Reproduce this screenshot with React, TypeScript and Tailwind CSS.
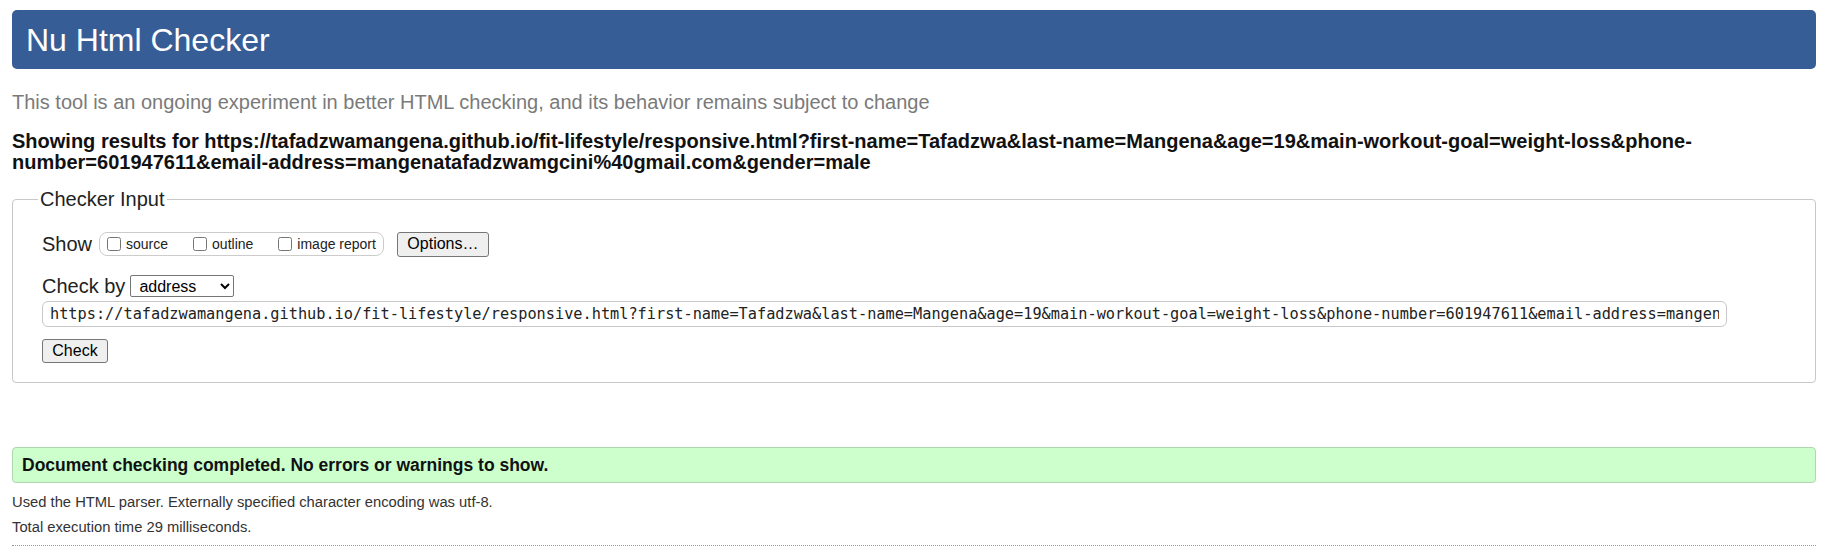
import { useState } from 'react';

const pageUrl =
  'https://tafadzwamangena.github.io/fit-lifestyle/responsive.html?first-name=Tafadzwa&last-name=Mangena&age=19&main-workout-goal=weight-loss&phone-number=601947611&email-address=mangenatafadzwamgcini%40gmail.com&gender=male';

export default function App() {
  const [url, setUrl] = useState(pageUrl);
  const [show, setShow] = useState({ source: false, outline: false, image: false });

  return (
    <div className="min-h-screen bg-white font-['Liberation_Sans',Arial,sans-serif] text-black">
      <div className="w-[1816px] pl-[12px] pt-[10px]">
        {/* Header */}
        <div className="flex h-[59px] items-center rounded-[5px] bg-[#365d95] pl-[14px]">
          <h1 className="text-[32px] leading-none text-white">Nu Html Checker</h1>
        </div>

        <p className="mt-[22px] text-[20px] leading-[23px] text-[#7a7a7a]">
          This tool is an ongoing experiment in better HTML checking, and its behavior remains subject to change
        </p>

        <p className="mt-[17px] text-[20px] font-bold leading-[21px] text-[#111]">
          Showing results for https://tafadzwamangena.github.io/fit-lifestyle/responsive.html?first-name=Tafadzwa&amp;last-name=Mangena&amp;age=19&amp;main-workout-goal=weight-loss&amp;phone-
          <br />
          number=601947611&amp;email-address=mangenatafadzwamgcini%40gmail.com&amp;gender=male
        </p>

        {/* Checker input */}
        <fieldset className="mt-[15px] rounded-[4px] border border-[#c8c8c8] pb-[19px] pl-[29px] pr-[20px] pt-[20px]">
          <legend className="-ml-[4px] px-[2px] text-[20px] leading-[23px] text-[#222]">Checker Input</legend>

          <div className="flex h-[26px] items-center">
            <span className="text-[20px] leading-[23px] text-[#222]">Show</span>
            <div className="ml-[7px] flex h-[24px] items-center gap-[25px] rounded-[8px] border border-[#cccccc] pl-[7px] pr-[7px]">
              <label className="flex items-center text-[14px] text-[#222]">
                <input
                  type="checkbox"
                  className="m-0 h-[14px] w-[14px]"
                  checked={show.source}
                  onChange={(e) => setShow({ ...show, source: e.target.checked })}
                />
                <span className="ml-[5px]">source</span>
              </label>
              <label className="flex items-center text-[14px] text-[#222]">
                <input
                  type="checkbox"
                  className="m-0 h-[14px] w-[14px]"
                  checked={show.outline}
                  onChange={(e) => setShow({ ...show, outline: e.target.checked })}
                />
                <span className="ml-[5px]">outline</span>
              </label>
              <label className="flex items-center text-[14px] text-[#222]">
                <input
                  type="checkbox"
                  className="m-0 h-[14px] w-[14px]"
                  checked={show.image}
                  onChange={(e) => setShow({ ...show, image: e.target.checked })}
                />
                <span className="ml-[5px]">image report</span>
              </label>
            </div>
            <button className="ml-[13px] h-[25px] w-[92px] rounded-[3px] border border-[#767676] bg-[#efefef] text-[16px] leading-none text-black">
              Options…
            </button>
          </div>

          <div className="mt-[18px] flex h-[22px] items-center">
            <span className="text-[20px] leading-[22px] text-[#222]">Check by</span>
            <select className="ml-[5px] h-[22px] w-[104px] rounded-[2px] border border-[#767676] bg-white pl-[4px] text-[16px] text-black">
              <option>address</option>
              <option>file upload</option>
              <option>text input</option>
            </select>
          </div>

          <input
            type="text"
            value={url}
            onChange={(e) => setUrl(e.target.value)}
            className="mt-[4px] block h-[26px] w-[1685px] rounded-[6px] border border-[#c8c8c8] px-[7px] font-['DejaVu_Sans_Mono',monospace] text-[15.25px] text-[#222]"
          />

          <button className="mt-[12px] block h-[24px] w-[66px] rounded-[3px] border border-[#767676] bg-[#efefef] text-[16px] leading-none text-black">
            Check
          </button>
        </fieldset>

        {/* Result */}
        <div className="mt-[64px] flex h-[36px] items-center rounded-[4px] border border-[#b0d6b0] bg-[#ccffcc] pl-[9px]">
          <span className="text-[17.5px] font-bold text-[#111]">
            Document checking completed. No errors or warnings to show.
          </span>
        </div>

        <p className="mt-[10px] text-[14.75px] leading-[18px] text-[#333]">
          Used the HTML parser. Externally specified character encoding was utf-8.
        </p>
        <p className="mt-[7px] text-[14.75px] leading-[18px] text-[#333]">Total execution time 29 milliseconds.</p>

        <div className="mt-[9px] border-t border-dotted border-[#999]" />
      </div>
    </div>
  );
}
